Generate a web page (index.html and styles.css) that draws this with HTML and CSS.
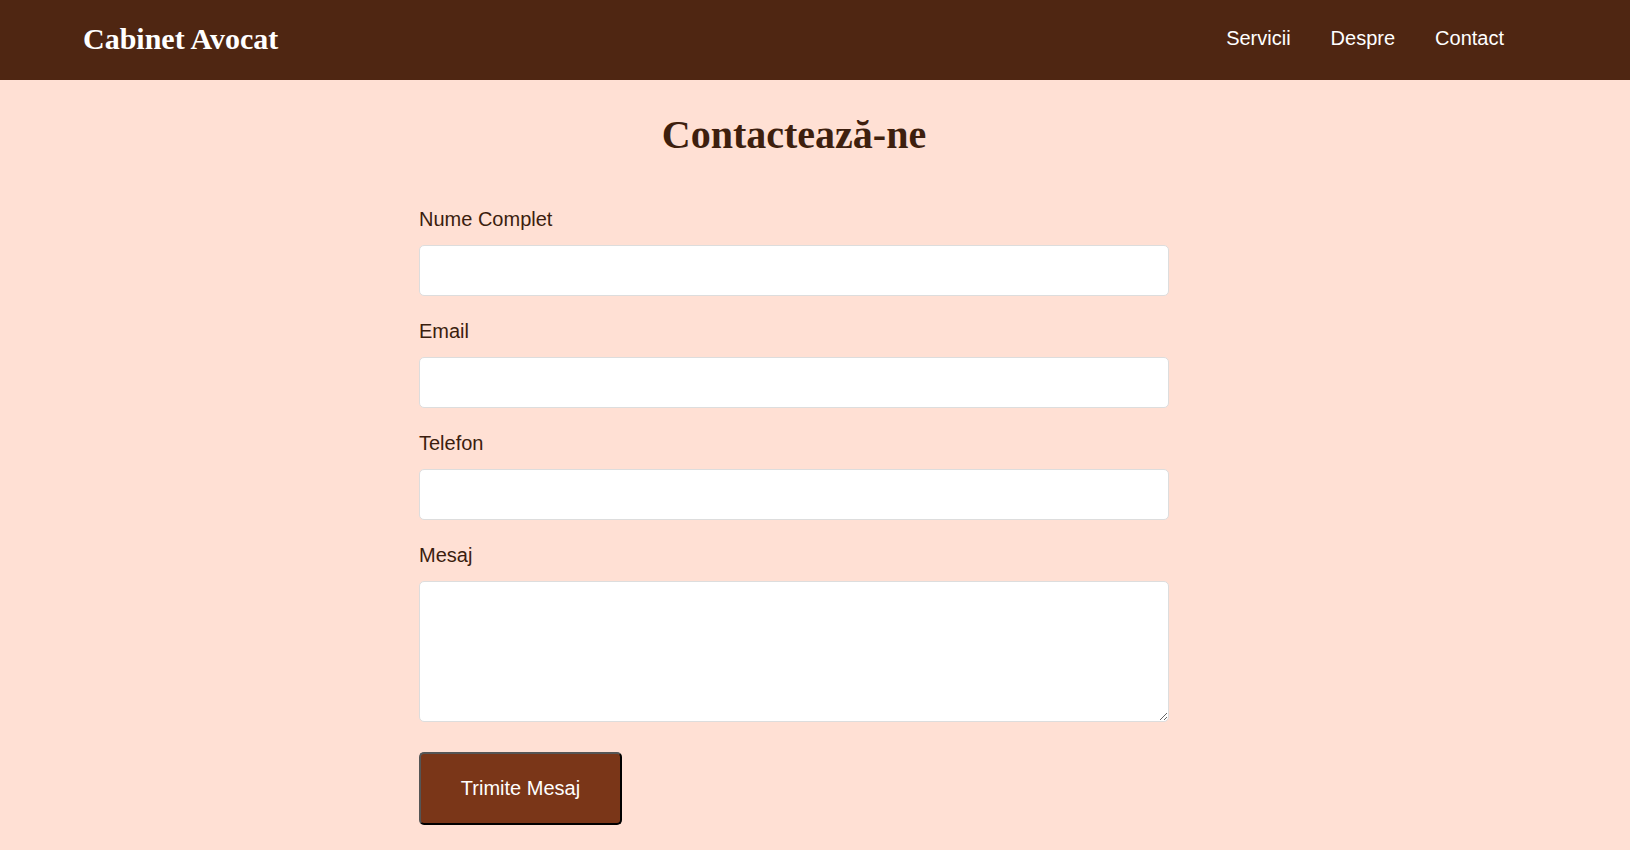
FILE: index.html
```html
<!DOCTYPE html>
<html lang="ro">
<head>
<meta charset="utf-8">
<title>Cabinet Avocat - Contact</title>
<link rel="stylesheet" href="styles.css">
</head>
<body>
<header class="site-header">
  <div class="logo">Cabinet Avocat</div>
  <nav class="nav">
    <a href="#" class="nav-link">Servicii</a>
    <a href="#" class="nav-link">Despre</a>
    <a href="#" class="nav-link">Contact</a>
  </nav>
</header>
<main class="container">
  <h1 class="title">Contactează-ne</h1>
  <form class="form">
    <div class="field">
      <label class="label" for="nume">Nume Complet</label>
      <input class="input" id="nume" type="text">
    </div>
    <div class="field">
      <label class="label" for="email">Email</label>
      <input class="input" id="email" type="email">
    </div>
    <div class="field">
      <label class="label" for="tel">Telefon</label>
      <input class="input" id="tel" type="tel">
    </div>
    <div class="field">
      <label class="label" for="mesaj">Mesaj</label>
      <textarea class="input textarea" id="mesaj"></textarea>
    </div>
    <button type="button" class="btn">Trimite Mesaj</button>
  </form>
</main>
</body>
</html>
```

FILE: styles.css
```css
* { box-sizing: border-box; }
html, body { margin: 0; padding: 0; }
body {
  background: #ffe0d4;
  font-family: "Liberation Sans", Arial, sans-serif;
  color: #3b1d0e;
}
.site-header {
  height: 80px;
  background: #4f2612;
  display: flex;
  align-items: center;
  justify-content: space-between;
  padding: 0 126px 3px 83px;
}
.logo {
  font-family: "Liberation Serif", "Times New Roman", serif;
  font-weight: bold;
  font-size: 30px;
  color: #fff;
}
.nav { display: flex; gap: 40px; }
.nav-link {
  color: #fff;
  text-decoration: none;
  font-size: 20px;
}
.container {
  width: 750px;
  margin-left: 419px;
  padding-bottom: 40px;
}
.title {
  font-family: "Liberation Serif", "Times New Roman", serif;
  font-weight: bold;
  font-size: 40px;
  line-height: 46px;
  text-align: center;
  color: #3e1f0e;
  margin: 32px 0 50px;
}
.form { display: flex; flex-direction: column; }
.field { display: flex; flex-direction: column; margin-bottom: 24px; }
.label {
  font-size: 20px;
  line-height: 23px;
  margin-bottom: 14px;
  color: #3b1d0e;
}
.input {
  display: block;
  width: 750px;
  height: 51px;
  background: #fff;
  border: 1px solid #ddd;
  border-radius: 5px;
  font-family: "Liberation Sans", Arial, sans-serif;
  font-size: 18px;
  padding: 0 12px;
  outline: none;
}
.textarea {
  height: 141px;
  padding: 12px;
  resize: vertical;
}
.field:last-of-type { margin-bottom: 30px; }
.btn {
  align-self: flex-start;
  width: 203px;
  height: 73px;
  background: #7a3618;
  color: #fff;
  font-family: "Liberation Sans", Arial, sans-serif;
  font-size: 20px;
  border: 2px solid;
  border-color: #555 #000 #000 #555;
  border-radius: 5px;
  padding: 0;
  cursor: pointer;
}
```
